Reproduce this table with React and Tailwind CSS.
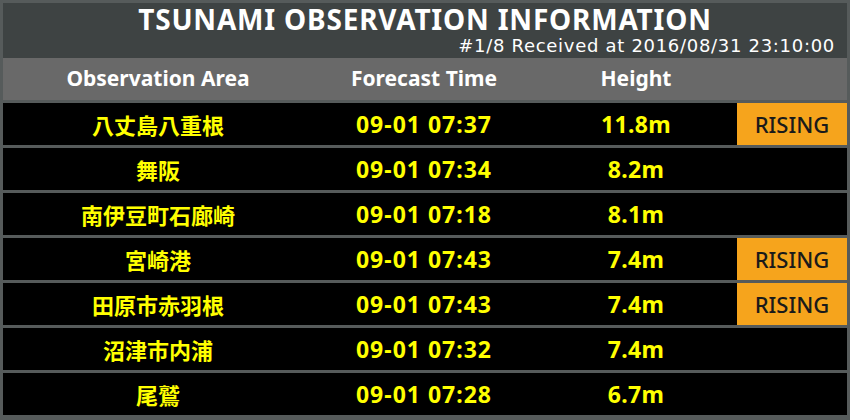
const ROWS = [
  { area: '八丈島八重根', time: '09-01 07:37', height: '11.8m', rising: true },
  { area: '舞阪', time: '09-01 07:34', height: '8.2m', rising: false },
  { area: '南伊豆町石廊崎', time: '09-01 07:18', height: '8.1m', rising: false },
  { area: '宮崎港', time: '09-01 07:43', height: '7.4m', rising: true },
  { area: '田原市赤羽根', time: '09-01 07:43', height: '7.4m', rising: true },
  { area: '沼津市内浦', time: '09-01 07:32', height: '7.4m', rising: false },
  { area: '尾鷲', time: '09-01 07:28', height: '6.7m', rising: false },
];

const COLS = 'grid grid-cols-[310px_222px_202px_110px]';

export default function App() {
  return (
    <div className="flex h-[420px] w-[850px] flex-col bg-[#565b5b] p-[3px] font-['Noto_Sans',sans-serif]">
      <div className="flex h-[55px] flex-col bg-[#3e4343] pt-[2px]">
        <h1 className="text-center text-[28px] font-bold leading-none tracking-[0.8px] text-white">
          TSUNAMI OBSERVATION INFORMATION
        </h1>
        <p className="mt-[4px] pr-[12px] text-right font-['DejaVu_Sans',sans-serif] text-[18px] leading-none tracking-[0.7px] text-white">
          #1/8 Received at 2016/08/31 23:10:00
        </p>
      </div>

      <div className={`${COLS} h-[42px] items-center bg-[#696969] text-[21px] font-bold text-white`}>
        <div className="text-center">Observation Area</div>
        <div className="text-center">Forecast Time</div>
        <div className="text-center">Height</div>
        <div />
      </div>

      <div className="mt-[3px] flex flex-col gap-[3px]">
        {ROWS.map((r, i) => (
          <div key={i} className={`${COLS} h-[42px] bg-black text-[#ffff00]`}>
            <div className="flex items-center justify-center font-['Noto_Sans_CJK_JP',sans-serif] text-[22px] font-bold">
              {r.area}
            </div>
            <div className="flex items-center justify-center text-[23px] font-bold tracking-[1px]">{r.time}</div>
            <div className="flex items-center justify-center text-[23px] font-bold tracking-[0.3px]">{r.height}</div>
            {r.rising ? (
              <div className="flex items-center justify-center bg-[#f6a41c] text-[22px] font-medium text-[#1a1a1a]">
                RISING
              </div>
            ) : (
              <div />
            )}
          </div>
        ))}
      </div>
    </div>
  );
}
